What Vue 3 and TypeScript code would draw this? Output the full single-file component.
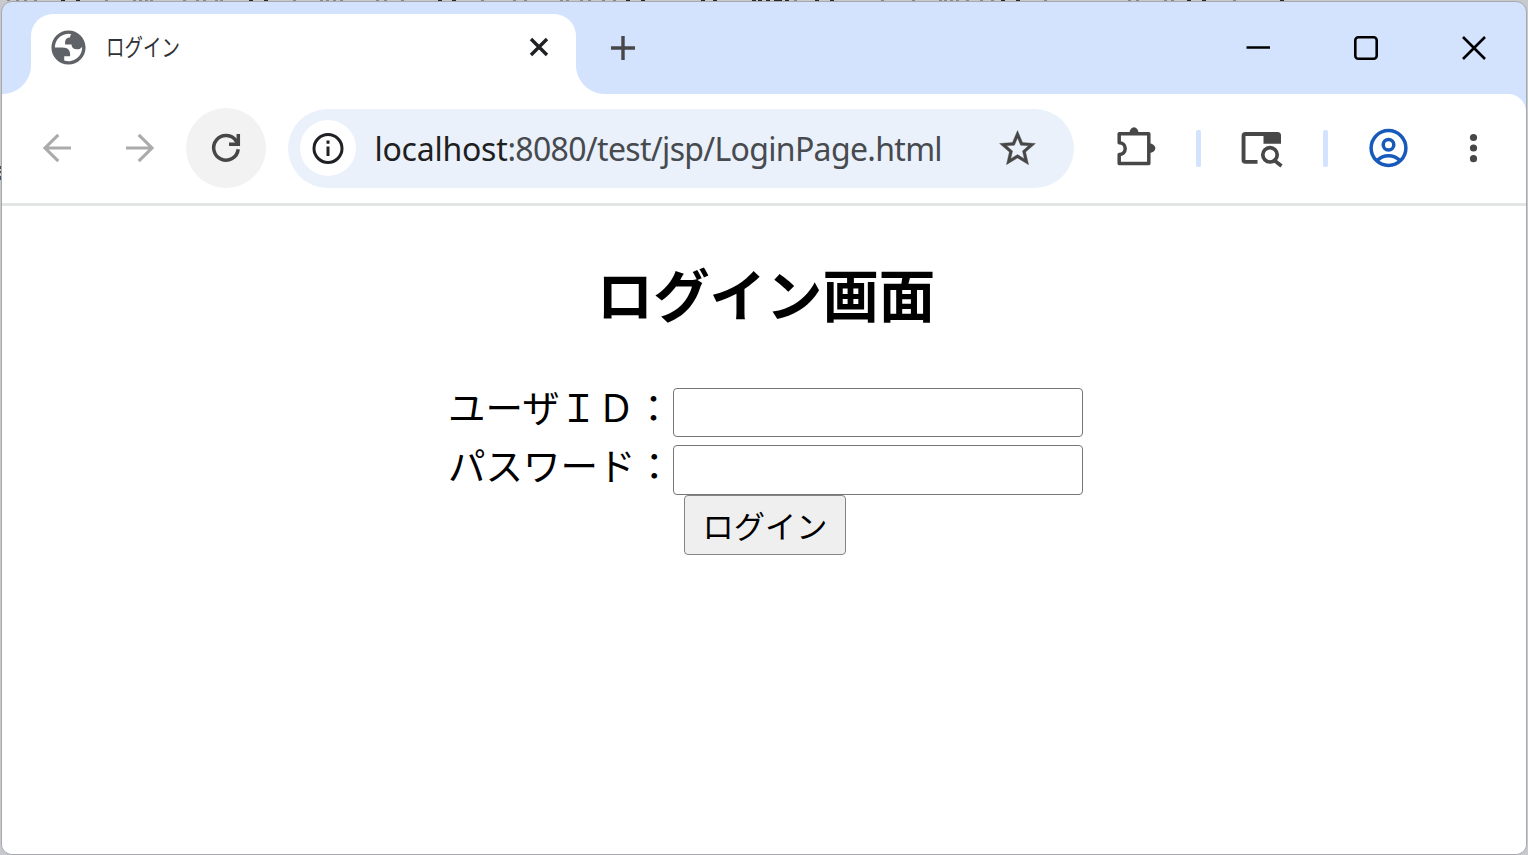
<script setup lang="ts">
import { ref } from 'vue'

const tabTitle = 'ログイン'
const host = 'localhost'
const path = ':8080/test/jsp/LoginPage.html'
const userId = ref('')
const password = ref('')

// Slivers of the document behind the window, visible along its top and left edges.
const darkMarks: number[] = [61, 76, 249, 264, 438, 452, 626, 641, 701, 713, 752, 758, 766, 774, 778, 785, 815, 830, 1001, 1016, 1187, 1202, 1280]
const faintMarks: number[] = [7, 16, 24, 34, 105, 133, 139, 145, 150, 183, 196, 203, 215, 220, 293, 320, 326, 333, 340, 376, 384, 401, 481, 513, 524, 560, 566, 580, 588, 602, 613, 794, 881, 912, 939, 944, 950, 956, 966, 980, 991, 1044, 1128, 1136, 1164, 1171, 1233]
</script>

<template>
  <div class="desktop">
    <svg class="backdrop" viewBox="0 0 1528 855">
      <rect v-for="x in darkMarks" :key="x" :x="x" y="0" width="4" height="1" fill="#25272c" />
      <rect v-for="x in faintMarks" :key="x" :x="x" y="0" width="3" height="1" fill="#85878c" />
      <path fill="#4b4d52" d="M0 166H1V169H0ZM0 171H1V173H0Z" />
      <path fill="#3d5270" d="M0 176H1V180H0Z" />
    </svg>
    <div class="window">
      <header class="tabs">
        <div class="tab">
          <svg class="globe" viewBox="0 0 24 24"><path fill="#5f6368" fill-rule="evenodd" d="M12 2C6.48 2 2 6.48 2 12s4.48 10 10 10 10-4.48 10-10S17.52 2 12 2zM4 12h4.4c3.407.022 4.922 1.73 4.543 5.127H9.488v2.47a8.004 8.004 0 0 0 10.498-8.083C19.327 12.504 18.332 13 17 13c-2.137 0-3.206-.916-3.206-2.75h-3.748c-.274-2.728.683-4.092 2.87-4.092 0-.975.327-1.597.811-1.97A8.004 8.004 0 0 0 4 12z" /></svg>
          <span class="tab-title">{{ tabTitle }}</span>
          <svg class="tab-close" viewBox="0 0 24 24"><path d="M4 4L20 20M20 4L4 20" /></svg>
        </div>
        <svg class="plus" viewBox="0 0 24 24"><path d="M12 0V24M0 12H24" /></svg>
        <div class="controls">
          <svg viewBox="0 0 24 24"><path d="M.5 11.5H24" /></svg>
          <svg viewBox="0 0 24 24"><rect x="1.3" y="1.3" width="21.4" height="21.4" rx="3" /></svg>
          <svg viewBox="0 0 24 24"><path d="M1 1L23 23M23 1L1 23" /></svg>
        </div>
      </header>

      <nav class="toolbar">
        <svg class="icon back" viewBox="0 0 48 48"><path d="M38 24H12.500M25.300 10.800L12 24L25.300 37.200" /></svg>
        <svg class="icon forward" viewBox="0 0 48 48"><path d="M10 24H35.500M22.700 10.800L36 24L22.700 37.200" /></svg>
        <div class="reload">
          <svg class="icon" viewBox="0 0 48 48"><path d="M36.200 25.300A12.300 12.300 0 1 1 34.300 17.200L36 20M36.300 10V20.300H27" /></svg>
        </div>
        <div class="address">
          <div class="info">
            <svg viewBox="0 0 48 48"><circle cx="24" cy="24.500" r="14" /><path d="M24 16.500V19.800M24 22.500V32" /></svg>
          </div>
          <div class="url"><span class="host">{{ host }}</span>{{ path }}</div>
          <svg class="star" viewBox="0 0 24 24"><path d="M22 9.240l-7.190-.62L12 2 9.190 8.630 2 9.240l5.460 4.730L5.820 21 12 17.270 18.180 21l-1.630-7.030L22 9.240zM12 15.400l-3.760 2.270 1-4.280-3.320-2.880 4.380-.38L12 6.100l1.710 4.040 4.380.38-3.320 2.880 1 4.280L12 15.400z" /></svg>
        </div>
        <svg class="icon puzzle" viewBox="0 0 48 48">
          <path stroke-linejoin="round" d="M7.200 18.800V9.700H36.800V39.500H7.200V30.500C10.500 30.500 13.200 28.200 13.200 24.600S10.500 18.800 7.200 18.800Z" />
          <path class="solid" d="M17.500 9A4.500 5.800 0 0 1 26.500 9ZM37.500 19.500A5.800 4.700 0 0 1 37.500 29Z" />
        </svg>
        <i class="divider" />
        <svg class="icon search" viewBox="0 0 48 48">
          <path class="solid" d="M7.500 8H39.500Q43 8 43 11.500V19.700H25.500V12H7.500V36H19.500V39.800H7.500Q3.600 39.800 3.600 36V12Q3.600 8 7.500 8Z" />
          <path stroke-width="3.600" d="M36.500 36.500L43.500 42" />
          <circle cx="32" cy="30.800" r="7.200" stroke-width="3.700" />
        </svg>
        <i class="divider second" />
        <svg class="icon profile" viewBox="0 0 48 48"><circle cx="24.500" cy="24" r="17.400" /><circle cx="24.500" cy="20.700" r="5.300" /><path d="M13 36.500Q18 31.800 24.500 31.800T36 36.500" /></svg>
        <svg class="icon menu" viewBox="0 0 48 48"><circle class="solid" cx="23.500" cy="13.500" r="3.600" /><circle class="solid" cx="23.500" cy="24" r="3.600" /><circle class="solid" cx="23.500" cy="34.700" r="3.600" /></svg>
      </nav>

      <main class="page">
        <h1>ログイン画面</h1>
        <form @submit.prevent>
          <label class="row"><span>ユーザＩＤ：</span><input v-model="userId" type="text" /></label>
          <label class="row"><span class="second">パスワード：</span><input v-model="password" class="password" type="password" /></label>
          <button type="submit">ログイン</button>
        </form>
      </main>
    </div>
  </div>
</template>

<style>
body { margin: 0; overflow: hidden; }
</style>

<style scoped>
* { box-sizing: border-box; }
svg { display: block; flex: none; fill: none; }
.desktop { position: relative; width: 1528px; height: 855px; padding: 1px; background: #c7c9cd; font-family: "Noto Sans CJK JP", sans-serif; }
.backdrop { position: absolute; inset: 0; width: 1528px; height: 855px; }
.window { position: relative; display: flex; flex-direction: column; width: 1526px; height: 854px; overflow: hidden; background: #d3e3fd; border: 1px solid #a7a9ad; border-radius: 11px; }
.tabs { height: 92px; flex: none; display: flex; align-items: flex-start; padding: 12px 0 0 29px; }
.tab { position: relative; width: 545px; height: 80px; display: flex; align-items: center; padding: 0 25px 14px 17px; border-radius: 22px 22px 0 0; background: #fff; }
.tab::before, .tab::after { content: ""; position: absolute; bottom: 0; width: 29px; height: 29px; }
.tab::before { right: 100%; background: radial-gradient(circle at 0 0, transparent 28.500px, #fff 29.500px); }
.tab::after { left: 100%; background: radial-gradient(circle at 100% 0, transparent 28.500px, #fff 29.500px); }
.globe { width: 41px; height: 41px; margin-left: -.500px; }
.tab-title { margin: -3px 0 0 17px; font-size: 24px; line-height: 40px; color: #303134; transform: scaleX(.770); transform-origin: left; white-space: nowrap; }
.tab-close { width: 24px; height: 24px; margin-left: auto; stroke: #202124; stroke-width: 3.400; }
.plus { width: 24px; height: 24px; margin: 22px 0 0 35px; stroke: #474747; stroke-width: 3.400; }
.controls { display: flex; gap: 84px; margin: 22px 40px 0 auto; }
.controls svg { width: 24px; height: 24px; stroke: #000; stroke-width: 2.600; }
.toolbar { height: 112px; flex: none; display: flex; align-items: center; padding: 0 0 1px 31px; border-bottom: 3px solid #e3e5e5; background: #fff; border-radius: 0 18px 0 0; }
.icon { width: 48px; height: 48px; stroke: #474747; stroke-width: 3.500; }
.back, .forward { stroke: #ababab; stroke-width: 3.100; }
.forward { margin-left: 35px; }
.reload { width: 80px; height: 80px; flex: none; display: grid; place-items: center; margin-left: 22px; border-radius: 50%; background: #f2f2f2; }
.address { width: 786px; height: 79px; flex: none; display: flex; align-items: center; margin-left: 22px; padding: 0 35px 0 12px; border-radius: 40px; background: #eaf1fa; }
.info { width: 56px; height: 56px; flex: none; display: grid; place-items: center; border-radius: 50%; background: #fff; }
.info svg { width: 48px; height: 48px; stroke: #202124; stroke-width: 3; }
.url { margin: 1px 0 0 18.500px; white-space: nowrap; font-family: "Noto Sans", sans-serif; font-size: 32px; line-height: 50px; letter-spacing: -.680px; color: #474a4e; }
.host { letter-spacing: -.250px; color: #1f1f1f; }
.star { width: 43px; height: 43px; margin-left: auto; fill: #474747; stroke: #474747; stroke-width: .200; }
.solid { fill: #474747; stroke: none; }
.puzzle { margin-left: 38px; }
.divider { width: 5px; height: 37px; flex: none; margin-left: 36px; border-radius: 2px; background: #d3e3fd; }
.search { margin-left: 37px; }
.divider.second { margin-left: 37px; }
.profile { margin-left: 36px; stroke: #185abc; }
.menu { margin-left: 38px; }
.page { flex: 1; padding-left: 4px; background: #fff; color: #000; text-align: center; }
h1 { margin: 0; padding-top: 45px; font-size: 56.400px; line-height: 84px; font-weight: 700; }
form { display: flex; flex-direction: column; width: 636px; margin: 53px 0 0 442px; }
.row { display: flex; align-items: flex-start; height: 57px; font-size: 37.500px; line-height: 36px; white-space: nowrap; }
.row span { width: 225px; flex: none; text-align: left; }
.row .second { line-height: 38px; }
.row input { width: 410px; height: 49px; margin: 0; border: 1px solid #767676; border-radius: 4px; background: #fff; }
.row input.password { height: 50px; }
button { width: 162px; height: 60px; margin: -7px 0 0 236px; padding: 0; border: 1px solid #858585; border-radius: 4px; background: #efefef; color: #000; font: 31.200px/40px "Noto Sans CJK JP", sans-serif; }
</style>
